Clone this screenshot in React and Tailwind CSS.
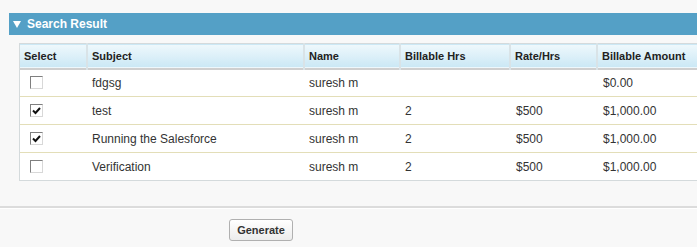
const rows = [
  { checked: false, subject: "fdgsg", name: "suresh m", hrs: "", rate: "", amount: "$0.00" },
  { checked: true, subject: "test", name: "suresh m", hrs: "2", rate: "$500", amount: "$1,000.00" },
  { checked: true, subject: "Running the Salesforce", name: "suresh m", hrs: "2", rate: "$500", amount: "$1,000.00" },
  { checked: false, subject: "Verification", name: "suresh m", hrs: "2", rate: "$500", amount: "$1,000.00" },
];

const cols = [
  { label: "Select", w: "w-[67px]" },
  { label: "Subject", w: "w-[217px]" },
  { label: "Name", w: "w-[96px]" },
  { label: "Billable Hrs", w: "w-[110px]" },
  { label: "Rate/Hrs", w: "w-[87px]" },
  { label: "Billable Amount", w: "w-[120px]" },
];

function Checkbox({ checked }) {
  return (
    <span className="flex h-[13px] w-[13px] items-center justify-center border border-t-[#7f7f7f] border-l-[#7f7f7f] border-b-[#d8d8d8] border-r-[#d8d8d8] bg-white">
      {checked && (
        <svg width="9" height="8" viewBox="0 0 9 8">
          <path d="M1 3.5 L3.5 6 L8 1" fill="none" stroke="#111" strokeWidth="2" />
        </svg>
      )}
    </span>
  );
}

export default function App() {
  return (
    <div
      className="h-[247px] w-[697px] overflow-hidden bg-[#f8f8f8] text-[#333]"
      style={{ fontFamily: '"Liberation Sans", Arial, sans-serif' }}
    >
      <div className="pt-[13px] pl-[9px]">
        <div className="flex h-[22px] items-center bg-[#54a0c6] pl-[4px] text-[12px] font-bold text-white">
          <svg width="8" height="7" viewBox="0 0 8 7" className="mr-[6px]">
            <path d="M0 0 H8 L4 7 Z" fill="#fff" />
          </svg>
          Search Result
        </div>
      </div>

      <div className="ml-[19px] mt-[8px] w-[700px] border-l border-[#d4dadc] bg-white">
        <table className="table-fixed border-collapse text-left">
          <thead>
            <tr className="h-[25px] border-t border-b-2 border-t-[#d4dadc] border-b-[#cfcfcf] bg-gradient-to-b from-[#eef8fc] to-[#cbe8f5]">
              {cols.map((c, i) => (
                <th
                  key={c.label}
                  className={`${c.w} p-0 pl-[4px] text-[11px] font-bold text-[#222] ${i > 0 ? "border-l-2 border-[#d9e3e7]" : ""}`}
                >
                  {c.label}
                </th>
              ))}
            </tr>
          </thead>
          <tbody>
            {rows.map((r, i) => (
              <tr
                key={r.subject}
                className={`h-[28px] border-b ${i === rows.length - 1 ? "border-[#d4dadc]" : "border-[#e3deb8]"} text-[12px]`}
              >
                <td className="p-0 pl-[10px]">
                  <Checkbox checked={r.checked} />
                </td>
                <td className="p-0 pl-[5px]">{r.subject}</td>
                <td className="p-0 pl-[5px]">{r.name}</td>
                <td className="p-0 pl-[5px]">{r.hrs}</td>
                <td className="p-0 pl-[6px]">{r.rate}</td>
                <td className="p-0 pl-[6px]">{r.amount}</td>
              </tr>
            ))}
          </tbody>
        </table>
      </div>

      <div className="mt-[25px] border-t-2 border-t-[#dcdcdc]">
        <div className="border-t border-white pt-[8px] pl-[229px]">
          <button className="h-[22px] w-[64px] rounded-[3px] border border-[#b0b0b0] bg-gradient-to-b from-white to-[#ececec] text-[11px] font-bold text-[#333]">
            Generate
          </button>
        </div>
      </div>
    </div>
  );
}
